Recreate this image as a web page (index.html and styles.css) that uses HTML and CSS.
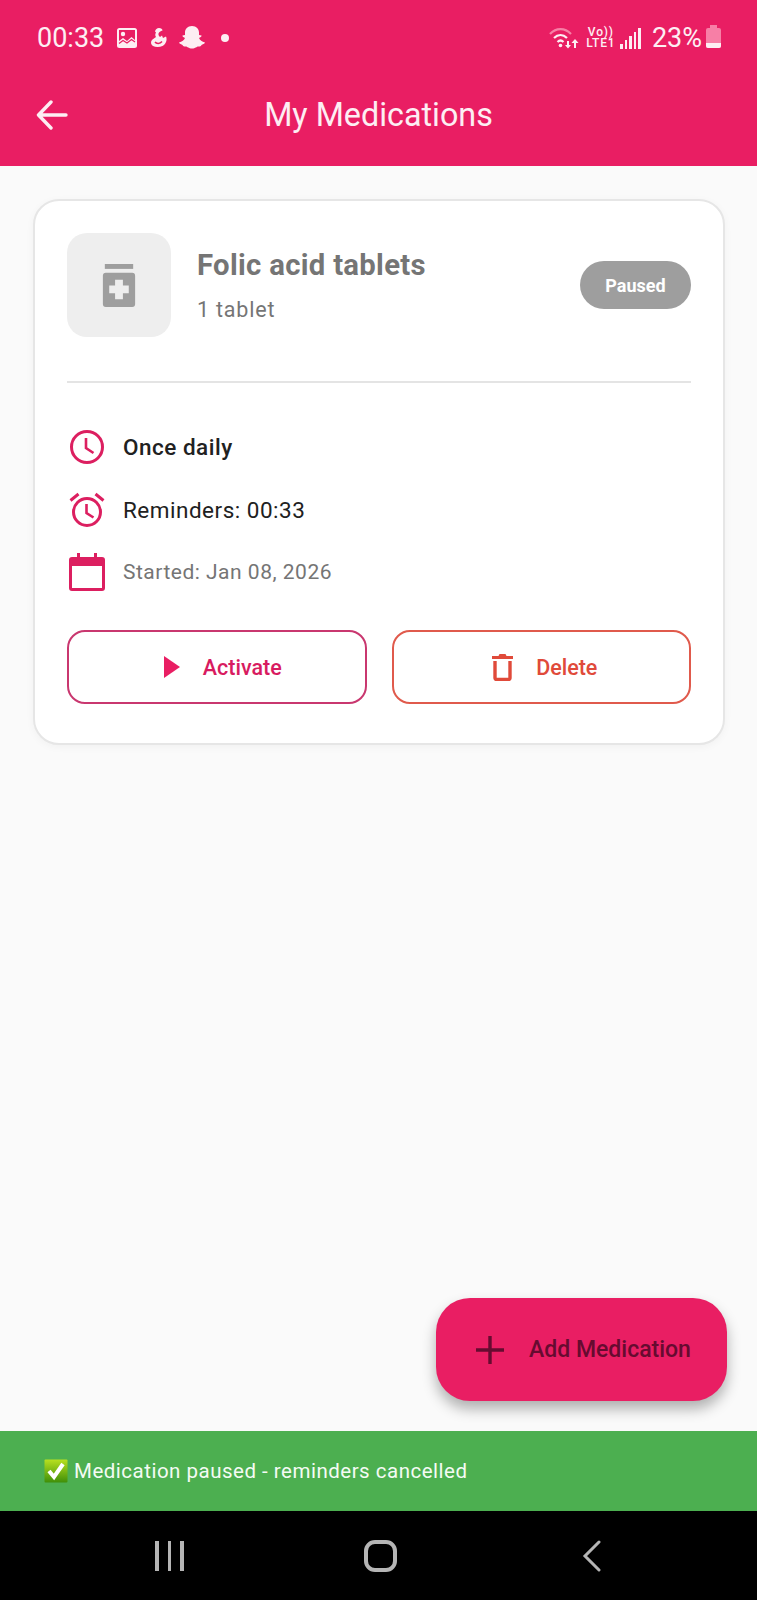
FILE: index.html
```html
<!DOCTYPE html>
<html lang="en">

<head>
    <meta charset="UTF-8">
    <meta name="viewport" content="width=device-width, initial-scale=1.0">
    <title>My Medications</title>
    <link rel="stylesheet" href="styles.css">
</head>

<body>
    <div class="screen">
        <header class="top">
            <div class="status-bar">
                <div class="status-left">
                    <span class="clock">00:33</span>
                    <svg class="gallery-icon" width="22" height="22" viewBox="0 0 22 22">
                        <rect x="1" y="1" width="20" height="20" rx="2.500" fill="#fdeef3" />
                        <rect x="3" y="3" width="16" height="16" fill="#e91e63" />
                        <circle cx="7" cy="7" r="2.200" fill="#fdeef3" />
                        <path fill="#fdeef3" d="M3 19v-5l4-3 4 3 4.500-4 3.500 3v6z" />
                        <path fill="none" stroke="#e91e63" stroke-width="1.200" d="M3 16.500l4-3 4 2.500 4.500-3.500 3.500 2.500" />
                    </svg>
                    <svg class="duck-icon" width="18" height="20" viewBox="0 0 18 20">
                        <path fill="#fdeef3" d="M9 0c2 0 3.500 1 3.500 2.500C10.500 3 9 4 8.500 5.500c-.3 1.500.5 2.500 1.500 3.500l2-1.500 1 2.500 3-1.500c1.500 3.500 0 7.500-3.500 9.500-3 1.200-7 1.200-9.500 0C.5 16.500.5 13 2.500 11.500L6 9C5 7.500 5 6 6 4.500L5 3.500C5.500 1.500 7 0 9 0z" />
                        <path fill="none" stroke="#e91e63" stroke-width="1.500" d="M5 14c1.500 2 5 2 7-.5" />
                    </svg>
                    <svg class="ghost-icon" width="26" height="24" viewBox="0 0 26 24">
                        <path fill="#fdeef3" d="M13 0c4.500 0 7 3 7 6.500V9l2.500.5c.5 1-1.500 2-2.500 2.500.8 2 3 3.500 6 4.500-.5 1.500-2.500 1.500-3.500 2.500-.5 1.500-1.500 1.500-3 1.500-2 0-3 2-6.500 2s-4.500-2-6.500-2c-1.500 0-2.500 0-3-1.500C2.500 18 .5 18 0 16.500 3 15.500 5.200 14 6 12c-1-.5-3-1.500-2.500-2.500L6 9V6.500C6 3 8.500 0 13 0z" />
                    </svg>
                    <span class="status-dot"></span>
                </div>
                <div class="status-right">
                    <svg class="wifi-icon" width="30" height="22" viewBox="0 0 30 22">
                        <path fill="none" stroke="#f77fa6" stroke-width="2.200" d="M1 7c6-6.500 15-6.500 21 0" />
                        <path fill="none" stroke="#fdeef3" stroke-width="2.200" d="M5 11c4-4 9-4 13 0M8.500 15c2-2 4-2 6 0" />
                        <circle cx="11.500" cy="18.500" r="1.800" fill="#fdeef3" />
                        <path fill="#fdeef3" d="M18 14h2v4h2l-3 3.500-3-3.500h2zM25 21h2v-5h2.500L26 12l-3.500 4H25z" />
                    </svg>
                    <div class="volte"><span>Vo))</span><span>LTE1</span></div>
                    <div class="signal">
                        <span class="bar-1"></span><span class="bar-2"></span><span class="bar-3"></span><span class="bar-4"></span><span class="bar-5"></span>
                    </div>
                    <span class="battery-text">23%</span>
                    <div class="battery"><span></span></div>
                </div>
            </div>
            <div class="app-bar">
                <svg class="back-icon" width="32" height="30" viewBox="0 0 32 30">
                    <path fill="none" stroke="#fdeef3" stroke-width="3.400" stroke-linecap="round" stroke-linejoin="round" d="M30 15H3M15 2 2.500 15 15 28" />
                </svg>
                <h1>My Medications</h1>
            </div>
        </header>

        <main class="content">
            <section class="card">
                <div class="card-head">
                    <div class="med-thumb">
                        <svg width="34" height="43" viewBox="0 0 34 44">
                            <rect x="2.500" y="0" width="29" height="5" fill="#9e9e9e" />
                            <rect x="0.500" y="9" width="33" height="35" rx="3" fill="#9e9e9e" />
                            <path fill="#eeeeee" d="M13 16h8v6h6v8h-6v6h-8v-6H7v-8h6z" />
                        </svg>
                    </div>
                    <div class="med-info">
                        <div class="med-name">Folic acid tablets</div>
                        <div class="med-dose">1 tablet</div>
                    </div>
                    <span class="badge">Paused</span>
                </div>
                <div class="divider"></div>
                <div class="detail-list">
                    <div class="detail">
                        <svg width="36" height="36" viewBox="0 0 36 36">
                            <circle cx="18" cy="18" r="15.500" fill="none" stroke="#dc1f60" stroke-width="3" />
                            <path fill="none" stroke="#dc1f60" stroke-width="2.600" d="M17 9v10l7.500 5" />
                        </svg>
                        <span class="detail-strong">Once daily</span>
                    </div>
                    <div class="detail">
                        <svg width="36" height="36" viewBox="0 0 36 36">
                            <circle cx="18" cy="20" r="13.500" fill="none" stroke="#dc1f60" stroke-width="3" />
                            <path fill="none" stroke="#dc1f60" stroke-width="2.600" d="M17.500 12v9l7 4.500" />
                            <path fill="none" stroke="#dc1f60" stroke-width="3" d="M1.500 8.500 9.500 2M34.500 8.500 26.500 2" />
                        </svg>
                        <span class="detail-normal">Reminders: 00:33</span>
                    </div>
                    <div class="detail">
                        <svg width="36" height="38" viewBox="0 0 36 38">
                            <path fill="#dc1f60" fill-rule="evenodd" d="M8 0h3v4h14V0h3v4h5a3 3 0 0 1 3 3v28a3 3 0 0 1-3 3H3a3 3 0 0 1-3-3V7a3 3 0 0 1 3-3h5zM3 13v22h30V13z" />
                        </svg>
                        <span class="detail-muted">Started: Jan 08, 2026</span>
                    </div>
                </div>
                <div class="actions">
                    <button type="button" class="action action-activate">
                        <svg width="28" height="22" viewBox="0 0 28 22"><path fill="#e91e63" d="M12 0 28 11 12 22z" /></svg>
                        Activate
                    </button>
                    <button type="button" class="action action-delete">
                        <svg width="28" height="28" viewBox="0 0 28 28">
                            <path fill="#e04a3a" d="M7 3h6.500l1-2h6l1 2H28v3H7z" />
                            <path fill="none" stroke="#e04a3a" stroke-width="3.400" stroke-linejoin="round" d="M10 8v17a1.500 1.500 0 0 0 1.500 1.500h12A1.500 1.500 0 0 0 25 25V8" />
                        </svg>
                        Delete
                    </button>
                </div>
            </section>

            <button type="button" class="fab">
                <svg width="28" height="28" viewBox="0 0 28 28">
                    <path fill="none" stroke="#660b30" stroke-width="3.400" d="M14 0v28M0 14h28" />
                </svg>
                Add Medication
            </button>
        </main>

        <div class="snackbar">
            <svg width="24" height="24" viewBox="0 0 24 24">
                <defs>
                    <linearGradient id="checkFill" x1="0" y1="0" x2="0" y2="1">
                        <stop offset="0" stop-color="#b8e020" />
                        <stop offset="1" stop-color="#3f8f08" />
                    </linearGradient>
                </defs>
                <rect x="0.500" y="0.500" width="23" height="23" rx="1" fill="url(#checkFill)" />
                <path fill="none" stroke="#ffffff" stroke-width="4" d="M5 12l5 6 9-13" />
            </svg>
            <span>Medication paused - reminders cancelled</span>
        </div>

        <nav class="nav-bar">
            <div class="nav-recents"><span></span><span></span><span></span></div>
            <div class="nav-home"></div>
            <svg width="20" height="32" viewBox="0 0 20 32">
                <path fill="none" stroke="#b5b5b5" stroke-width="3" stroke-linecap="round" d="M17 2 3 16l14 14" />
            </svg>
        </nav>
    </div>
</body>

</html>
```

FILE: styles.css
```css
* {
    box-sizing: border-box;
}
body {
    margin: 0;
    font-family: Roboto, "Liberation Sans", sans-serif;
    background: #fafafa;
}
.screen {
    display: flex;
    flex-direction: column;
    width: 757px;
    height: 1600px;
    overflow: hidden;
}

/* top pink area */
.top {
    height: 166px;
    flex: none;
    background: #e91e63;
    color: #fdeef3;
}
.status-bar {
    display: flex;
    justify-content: space-between;
    align-items: center;
    height: 76px;
    padding: 0 36px 0 37px;
}
.status-left,
.status-right {
    display: flex;
    align-items: center;
}
.clock {
    font-size: 27px;
    margin-right: 12px;
}
.duck-icon {
    margin-left: 12px;
}
.ghost-icon {
    margin-left: 11px;
}
.status-dot {
    width: 8px;
    height: 8px;
    margin-left: 16px;
    border-radius: 50%;
    background: #fdeef3;
}
.volte {
    display: flex;
    flex-direction: column;
    align-items: center;
    gap: 0;
    margin-left: 7px;
    font-size: 12px;
    font-weight: 500;
    line-height: 11px;
    letter-spacing: 0.8px;
}
.signal {
    display: flex;
    align-items: flex-end;
    gap: 2px;
    height: 21px;
    margin-left: 5px;
}
.signal span {
    width: 2.500px;
    background: #fdeef3;
}
.bar-1 { height: 5px; }
.bar-2 { height: 9px; }
.bar-3 { height: 13px; }
.bar-4 { height: 17px; }
.bar-5 { height: 21px; }
.battery-text {
    margin-left: 11px;
    font-size: 27px;
}
.battery {
    display: flex;
    align-items: flex-end;
    position: relative;
    width: 15px;
    height: 20px;
    margin-left: 4px;
    border-radius: 2px;
    background: #f77fa6;
}
.battery::before {
    content: "";
    position: absolute;
    top: -3px;
    left: 4px;
    width: 7px;
    height: 3px;
    background: #f77fa6;
}
.battery span {
    width: 100%;
    height: 5px;
    border-radius: 0 0 2px 2px;
    background: #fdeef3;
}
.app-bar {
    display: flex;
    align-items: center;
    height: 78px;
    padding: 0 36px;
}
.app-bar h1 {
    flex: 1;
    margin: 0 32px 0 0;
    text-align: center;
    font-size: 32.300px;
    font-weight: 400;
}

/* main list */
.content {
    flex: 1;
    display: flex;
    flex-direction: column;
    padding: 33px 30px 30px 33px;
}
.card {
    width: 692px;
    height: 546px;
    padding: 32px;
    background: #fff;
    border: 2px solid #e6e6e6;
    border-radius: 26px;
    box-shadow: 0 2px 8px rgba(0, 0, 0, 0.04);
}
.card-head {
    display: flex;
    align-items: center;
}
.med-thumb {
    display: flex;
    align-items: center;
    justify-content: center;
    width: 104px;
    height: 104px;
    border-radius: 20px;
    background: #eeeeee;
}
.med-info {
    flex: 1;
    margin-left: 26px;
}
.med-name {
    font-size: 29.300px;
    font-weight: 700;
    letter-spacing: 0.3px;
    color: #757575;
}
.med-dose {
    margin-top: 15px;
    font-size: 21.500px;
    letter-spacing: 0.8px;
    color: #757575;
}
.badge {
    display: flex;
    align-items: center;
    justify-content: center;
    width: 111px;
    height: 48px;
    border-radius: 24px;
    background: #9e9e9e;
    color: #fff;
    font-size: 18px;
    font-weight: 700;
}
.divider {
    height: 2px;
    margin-top: 44px;
    background: #e4e4e4;
}
.detail-list {
    display: flex;
    flex-direction: column;
    margin-top: 45px;
    gap: 24.500px;
}
.detail {
    display: flex;
    align-items: center;
    gap: 18px;
    height: 38px;
    padding-left: 2px;
    font-size: 22.500px;
    letter-spacing: 0.5px;
}
.detail-strong {
    font-weight: 500;
    color: #212121;
}
.detail-normal {
    color: #212121;
}
.detail-muted {
    font-size: 21px;
    color: #757575;
}
.actions {
    display: flex;
    gap: 25px;
    margin-top: 39px;
}
.action {
    flex: 1;
    display: flex;
    align-items: center;
    justify-content: center;
    gap: 23px;
    height: 74px;
    background: #fff;
    border: 2px solid;
    border-radius: 18px;
    font-family: inherit;
    font-size: 21.500px;
    font-weight: 500;
}
.action-activate {
    border-color: #c9376f;
    color: #d81b60;
}
.action-delete {
    border-color: #e05a4c;
    color: #e04a3a;
}

/* floating add button */
.fab {
    display: flex;
    align-items: center;
    gap: 25px;
    align-self: flex-end;
    width: 291px;
    height: 103px;
    margin-top: auto;
    padding: 0 0 0 40px;
    border: none;
    border-radius: 34px;
    background: #e91e63;
    box-shadow: 0 8px 14px rgba(0, 0, 0, 0.3);
    font-family: inherit;
    font-size: 23px;
    font-weight: 500;
    color: #660b30;
}

/* bottom */
.snackbar {
    display: flex;
    align-items: center;
    gap: 6px;
    flex: none;
    height: 80px;
    padding-left: 44px;
    background: #4caf50;
    color: #f4fbf4;
    font-size: 20.500px;
    letter-spacing: 0.5px;
}
.nav-bar {
    display: flex;
    align-items: center;
    flex: none;
    height: 89px;
    padding-left: 155px;
    background: #000;
}
.nav-recents {
    display: flex;
    gap: 9px;
}
.nav-recents span {
    width: 3.500px;
    height: 30px;
    background: #b5b5b5;
}
.nav-home {
    width: 33px;
    height: 32px;
    margin: 0 185px 0 180px;
    border: 4px solid #b5b5b5;
    border-radius: 11px;
}
```
